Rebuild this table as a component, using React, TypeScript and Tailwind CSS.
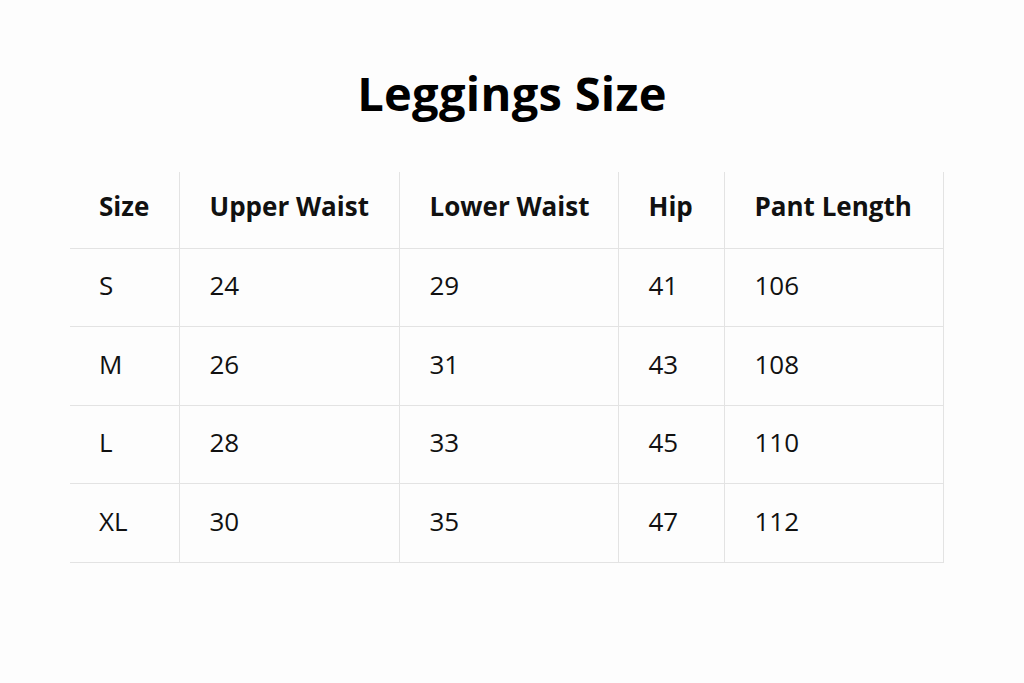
const headers = ["Size", "Upper Waist", "Lower Waist", "Hip", "Pant Length"];

const rows = [
  ["S", "24", "29", "41", "106"],
  ["M", "26", "31", "43", "108"],
  ["L", "28", "33", "45", "110"],
  ["XL", "30", "35", "47", "112"],
];

const widths = ["w-[109px]", "w-[220px]", "w-[219px]", "w-[106px]", "w-[219px]"];

export default function App() {
  return (
    <div className="min-h-screen w-full bg-[#fdfdfd] font-['Open_Sans','Noto_Sans',sans-serif] text-[#111]">
      <div className="flex h-[172px] items-start justify-center pt-[62px]">
        <h1 className="text-[47px] leading-[62px] font-bold tracking-[0.3px] text-black">Leggings Size</h1>
      </div>
      <table className="ml-[70px] w-[873px] table-fixed border-collapse">
        <colgroup>
          {widths.map((w, i) => (
            <col key={i} className={w} />
          ))}
        </colgroup>
        <thead>
          <tr className="h-[76px]">
            {headers.map((h) => (
              <th
                key={h}
                className="border-r border-b border-[#e3e3e3] pb-[6px] pl-[30px] text-left align-middle text-[26px] font-bold text-[#111] first:pl-[29px]"
              >
                {h}
              </th>
            ))}
          </tr>
        </thead>
        <tbody>
          {rows.map((r) => (
            <tr key={r[0]} className="h-[78.5px]">
              {r.map((c, i) => (
                <td
                  key={i}
                  className="border-r border-b border-[#e3e3e3] pb-[3px] pl-[30px] text-left align-middle text-[26px] font-normal first:pl-[29px]"
                >
                  {c}
                </td>
              ))}
            </tr>
          ))}
        </tbody>
      </table>
    </div>
  );
}
